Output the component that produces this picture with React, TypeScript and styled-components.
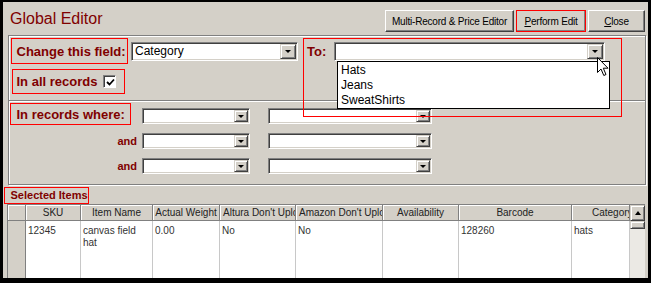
import * as React from "react";
import styled, { createGlobalStyle } from "styled-components";

const FACE = "#d4d0c8";
const MAROON = "#800000";
const MARK = "#ff0000";

const GlobalStyle = createGlobalStyle`
  html, body {
    margin: 0;
    padding: 0;
    background: #000;
  }
  body {
    font-family: "Liberation Sans", Arial, sans-serif;
  }
`;

const columns = [
  { key: "sel", title: "", width: 18 },
  { key: "sku", title: "SKU", width: 55 },
  { key: "name", title: "Item Name", width: 72 },
  { key: "weight", title: "Actual Weight", width: 67 },
  { key: "altura", title: "Altura Don't Upload", width: 76, align: "left", pad: 3 },
  { key: "amazon", title: "Amazon Don't Upload", width: 87, align: "left", pad: 3 },
  { key: "avail", title: "Availability", width: 76 },
  { key: "barcode", title: "Barcode", width: 113 },
  { key: "category", title: "Category", width: 58, align: "left", pad: 20 },
];

const row: Record<string, string> = {
  sku: "12345",
  name: "canvas field hat",
  weight: "0.00",
  altura: "No",
  amazon: "No",
  avail: "",
  barcode: "128260",
  category: "hats",
};

export default function App() {
  return (
    <>
      <GlobalStyle />
      <Window>
        <TitleBar>
          <Title>Global Editor</Title>
          <Buttons>
            <Button $w={129}>Multi-Record &amp; Price Editor</Button>
            <Button $w={70} $marked>
              <u>P</u>erform Edit
            </Button>
            <Button $w={57}>
              <u>C</u>lose
            </Button>
          </Buttons>
        </TitleBar>

        <Panel>
          <TopSection>
            <LeftCol>
              <FieldRow>
                <MarkBox $w={117} $h={26} $pad={5}>
                  <Label>Change this field:</Label>
                </MarkBox>
                <Combo $w={167} $h={19} value="Category" />
              </FieldRow>
              <AllRow>
                <MarkBox $w={113} $h={25} $pad={4}>
                  <Label>In all records</Label>
                  <Check>
                    <svg width="9" height="9" viewBox="0 0 9 9">
                      <path d="M1 4 L3.5 6.5 L8 1.5" fill="none" stroke="#000" strokeWidth="1.8" />
                    </svg>
                  </Check>
                </MarkBox>
              </AllRow>
            </LeftCol>

            <ToArea>
              <ToLabel>To:</ToLabel>
              <Combo $w={271} $h={19} value="" />
              <DropList>
                <DropItem>Hats</DropItem>
                <DropItem>Jeans</DropItem>
                <DropItem>SweatShirts</DropItem>
              </DropList>
              <Cursor width="13" height="20" viewBox="0 0 13 20">
                <path
                  d="M0.5 0.5 L0.5 15.5 L4 12 L6.8 18.5 L9 17.5 L6.3 11.2 L11 11.2 Z"
                  fill="#fff"
                  stroke="#000"
                  strokeWidth="1"
                  strokeLinejoin="round"
                />
              </Cursor>
            </ToArea>
          </TopSection>

          <Divider />

          <WhereGrid>
            <MarkBox $w={121} $h={22} $pad={6} $self="start">
              <Label>In records where:</Label>
            </MarkBox>
            <Combo $w={108} $h={16} value="" />
            <Combo $w={164} $h={16} value="" />

            <AndLabel>and</AndLabel>
            <Combo $w={108} $h={16} value="" />
            <Combo $w={164} $h={16} value="" />

            <AndLabel>and</AndLabel>
            <Combo $w={108} $h={16} value="" />
            <Combo $w={164} $h={16} value="" />
          </WhereGrid>
        </Panel>

        <SelectedLabel>Selected Items</SelectedLabel>

        <Table $cols={columns.map((c) => c.width)}>
          {columns.map((c) => (
            <HeadCell key={c.key} $align={c.align} $pad={c.pad}>
              {c.title}
            </HeadCell>
          ))}
          <ScrollBar>
            <ScrollButton>
              <UpArrow />
            </ScrollButton>
            <Thumb />
            <Track />
          </ScrollBar>
          {columns.map((c) =>
            c.key === "sel" ? (
              <SelectorCell key={c.key} />
            ) : (
              <DataCell key={c.key}>{row[c.key]}</DataCell>
            )
          )}
        </Table>
      </Window>
    </>
  );
}

function Combo({ $w, $h, value }: { $w: number; $h: number; value: string }) {
  return (
    <ComboBox $w={$w} $h={$h}>
      <ComboText $h={$h}>{value}</ComboText>
      <DropButton $h={$h}>
        <DownArrow />
      </DropButton>
    </ComboBox>
  );
}

const Window = styled.div`
  width: 651px;
  height: 283px;
  box-sizing: border-box;
  border-style: solid;
  border-color: #000;
  border-width: 2px 3px 5px 3px;
  background: ${FACE};
  display: flex;
  flex-direction: column;
  overflow: hidden;
`;

const TitleBar = styled.div`
  display: flex;
  justify-content: space-between;
  align-items: flex-start;
  height: 33px;
  box-sizing: border-box;
  padding: 8px 3px 0 7px;
`;

const Title = styled.div`
  font-size: 16px;
  line-height: 18px;
  color: ${MAROON};
`;

const Buttons = styled.div`
  display: flex;
  gap: 2px;
`;

const Button = styled.div<{ $w: number; $marked?: boolean }>`
  width: ${(p) => p.$w}px;
  height: 22px;
  box-sizing: border-box;
  display: flex;
  align-items: center;
  justify-content: center;
  font-size: 10px;
  letter-spacing: -0.2px;
  color: #000;
  white-space: nowrap;
  background: ${FACE};
  border: 1px solid;
  border-color: #fff #404040 #404040 #fff;
  box-shadow: inset -1px -1px 0 #808080;
  outline: ${(p) => (p.$marked ? `1.5px solid ${MARK}` : "none")};
  outline-offset: -1px;
`;

const Panel = styled.div`
  margin: 0 2px 0 5px;
  border: 1px solid #808080;
  box-shadow: inset 1px 1px 0 #fff, 1px 1px 0 #fff;
  display: flex;
  flex-direction: column;
`;

const TopSection = styled.div`
  height: 64px;
  box-sizing: border-box;
  padding: 2px 0 0 2px;
  display: flex;
  align-items: flex-start;
`;

const LeftCol = styled.div`
  display: flex;
  flex-direction: column;
`;

const FieldRow = styled.div`
  display: flex;
  align-items: center;
  gap: 3px;
`;

const AllRow = styled.div`
  margin: 5px 0 0 1px;
`;

const MarkBox = styled.div<{ $w: number; $h: number; $pad: number; $self?: string }>`
  width: ${(p) => p.$w}px;
  height: ${(p) => p.$h}px;
  box-sizing: border-box;
  border: 1.5px solid ${MARK};
  padding-left: ${(p) => p.$pad - 0.5}px;
  display: flex;
  align-items: center;
  align-self: ${(p) => p.$self ?? "auto"};
`;

const Label = styled.span`
  font-size: 13px;
  font-weight: bold;
  color: ${MAROON};
  white-space: nowrap;
`;

const Check = styled.span`
  width: 13px;
  height: 13px;
  box-sizing: border-box;
  margin-left: 6px;
  background: #fff;
  border: 1px solid;
  border-color: #808080 #fff #fff #808080;
  box-shadow: inset 1px 1px 0 #404040;
  display: flex;
  align-items: center;
  justify-content: center;
  padding: 1px 0 0 1px;
`;

const ToArea = styled.div`
  position: relative;
  margin-left: 5px;
  width: 319px;
  height: 26px;
  display: flex;
  align-items: center;

  &::after {
    content: "";
    position: absolute;
    top: 0;
    left: 0;
    width: 100%;
    height: 79px;
    box-sizing: border-box;
    border: 1.5px solid ${MARK};
    pointer-events: none;
    z-index: 3;
  }
`;

const ToLabel = styled(Label)`
  width: 31px;
  padding-left: 4px;
  box-sizing: border-box;
  flex: none;
`;

const DropList = styled.div`
  position: absolute;
  top: 23px;
  left: 34px;
  width: 273px;
  height: 48px;
  box-sizing: border-box;
  background: #fff;
  border: 1px solid #000;
  padding: 1px 0 0 3px;
  z-index: 2;
`;

const DropItem = styled.div`
  font-size: 12px;
  line-height: 15px;
  color: #000;
`;

const Cursor = styled.svg`
  position: absolute;
  left: 294px;
  top: 19px;
  z-index: 4;
`;

const ComboBox = styled.div<{ $w: number; $h: number }>`
  width: ${(p) => p.$w}px;
  height: ${(p) => p.$h}px;
  box-sizing: border-box;
  background: #fff;
  border: 1px solid;
  border-color: #808080 #fff #fff #808080;
  box-shadow: inset 1px 1px 0 #404040, inset -1px -1px 0 ${FACE};
  display: flex;
  padding: 1px;
`;

const ComboText = styled.div<{ $h: number }>`
  flex: 1;
  font-size: 12px;
  line-height: ${(p) => p.$h - 4}px;
  padding-left: 2px;
  color: #000;
  overflow: hidden;
  white-space: nowrap;
`;

const DropButton = styled.div<{ $h: number }>`
  width: ${(p) => (p.$h > 17 ? 16 : 14)}px;
  box-sizing: border-box;
  background: ${FACE};
  border: 1px solid;
  border-color: ${FACE} #404040 #404040 ${FACE};
  box-shadow: inset 1px 1px 0 #fff, inset -1px -1px 0 #808080;
  display: flex;
  align-items: center;
  justify-content: center;
`;

const DownArrow = styled.span`
  width: 0;
  height: 0;
  border-left: 3px solid transparent;
  border-right: 3px solid transparent;
  border-top: 3px solid #000;
  margin-top: 1px;
`;

const UpArrow = styled.span`
  width: 0;
  height: 0;
  border-left: 3.5px solid transparent;
  border-right: 3.5px solid transparent;
  border-bottom: 4px solid #000;
`;

const Divider = styled.div`
  border-top: 1px solid #808080;
  border-bottom: 1px solid #fff;
`;

const WhereGrid = styled.div`
  display: grid;
  grid-template-columns: 132px 126px 164px;
  grid-auto-rows: 25px;
  align-items: center;
  padding: 1px 0 6px 1px;
`;

const AndLabel = styled.span`
  font-size: 11px;
  font-weight: bold;
  color: ${MAROON};
  text-align: right;
  padding-right: 5px;
`;

const SelectedLabel = styled.div`
  margin: 2px 0 0 1px;
  width: 85px;
  height: 17px;
  box-sizing: border-box;
  border: 1.5px solid ${MARK};
  padding-left: 5.5px;
  font-size: 11px;
  font-weight: bold;
  line-height: 14px;
  color: ${MAROON};
  white-space: nowrap;
`;

const Table = styled.div<{ $cols: number[] }>`
  flex: 1;
  margin-left: 4px;
  width: 638px;
  box-sizing: border-box;
  border-top: 1px solid #808080;
  border-left: 1px solid #808080;
  display: grid;
  grid-template-columns: ${(p) => p.$cols.map((w) => `${w}px`).join(" ")} 15px;
  grid-template-rows: 16px 1fr;
  overflow: hidden;
`;

const HeadCell = styled.div<{ $align?: string; $pad?: number }>`
  box-sizing: border-box;
  background: ${FACE};
  border-right: 1px solid #808080;
  border-bottom: 1px solid #808080;
  box-shadow: inset 1px 1px 0 #fff;
  font-size: 10px;
  line-height: 15px;
  color: #222;
  text-align: ${(p) => p.$align ?? "center"};
  padding-left: ${(p) => p.$pad ?? 0}px;
  white-space: nowrap;
  overflow: hidden;
`;

const SelectorCell = styled.div`
  background: ${FACE};
  border-right: 1px solid #808080;
`;

const DataCell = styled.div`
  background: #fff;
  border-right: 1px solid #c8c8c8;
  padding: 4px 2px 0 2px;
  font-size: 10px;
  line-height: 12px;
  color: #333;
`;

const ScrollBar = styled.div`
  grid-column: 10;
  grid-row: 1 / 3;
  display: flex;
  flex-direction: column;
`;

const ScrollButton = styled.div`
  height: 16px;
  box-sizing: border-box;
  background: ${FACE};
  border: 1px solid;
  border-color: ${FACE} #404040 #404040 ${FACE};
  box-shadow: inset 1px 1px 0 #fff, inset -1px -1px 0 #808080;
  display: flex;
  align-items: center;
  justify-content: center;
`;

const Thumb = styled(ScrollButton)`
  height: 8px;
`;

const Track = styled.div`
  flex: 1;
  background: #ebe9e4;
`;
